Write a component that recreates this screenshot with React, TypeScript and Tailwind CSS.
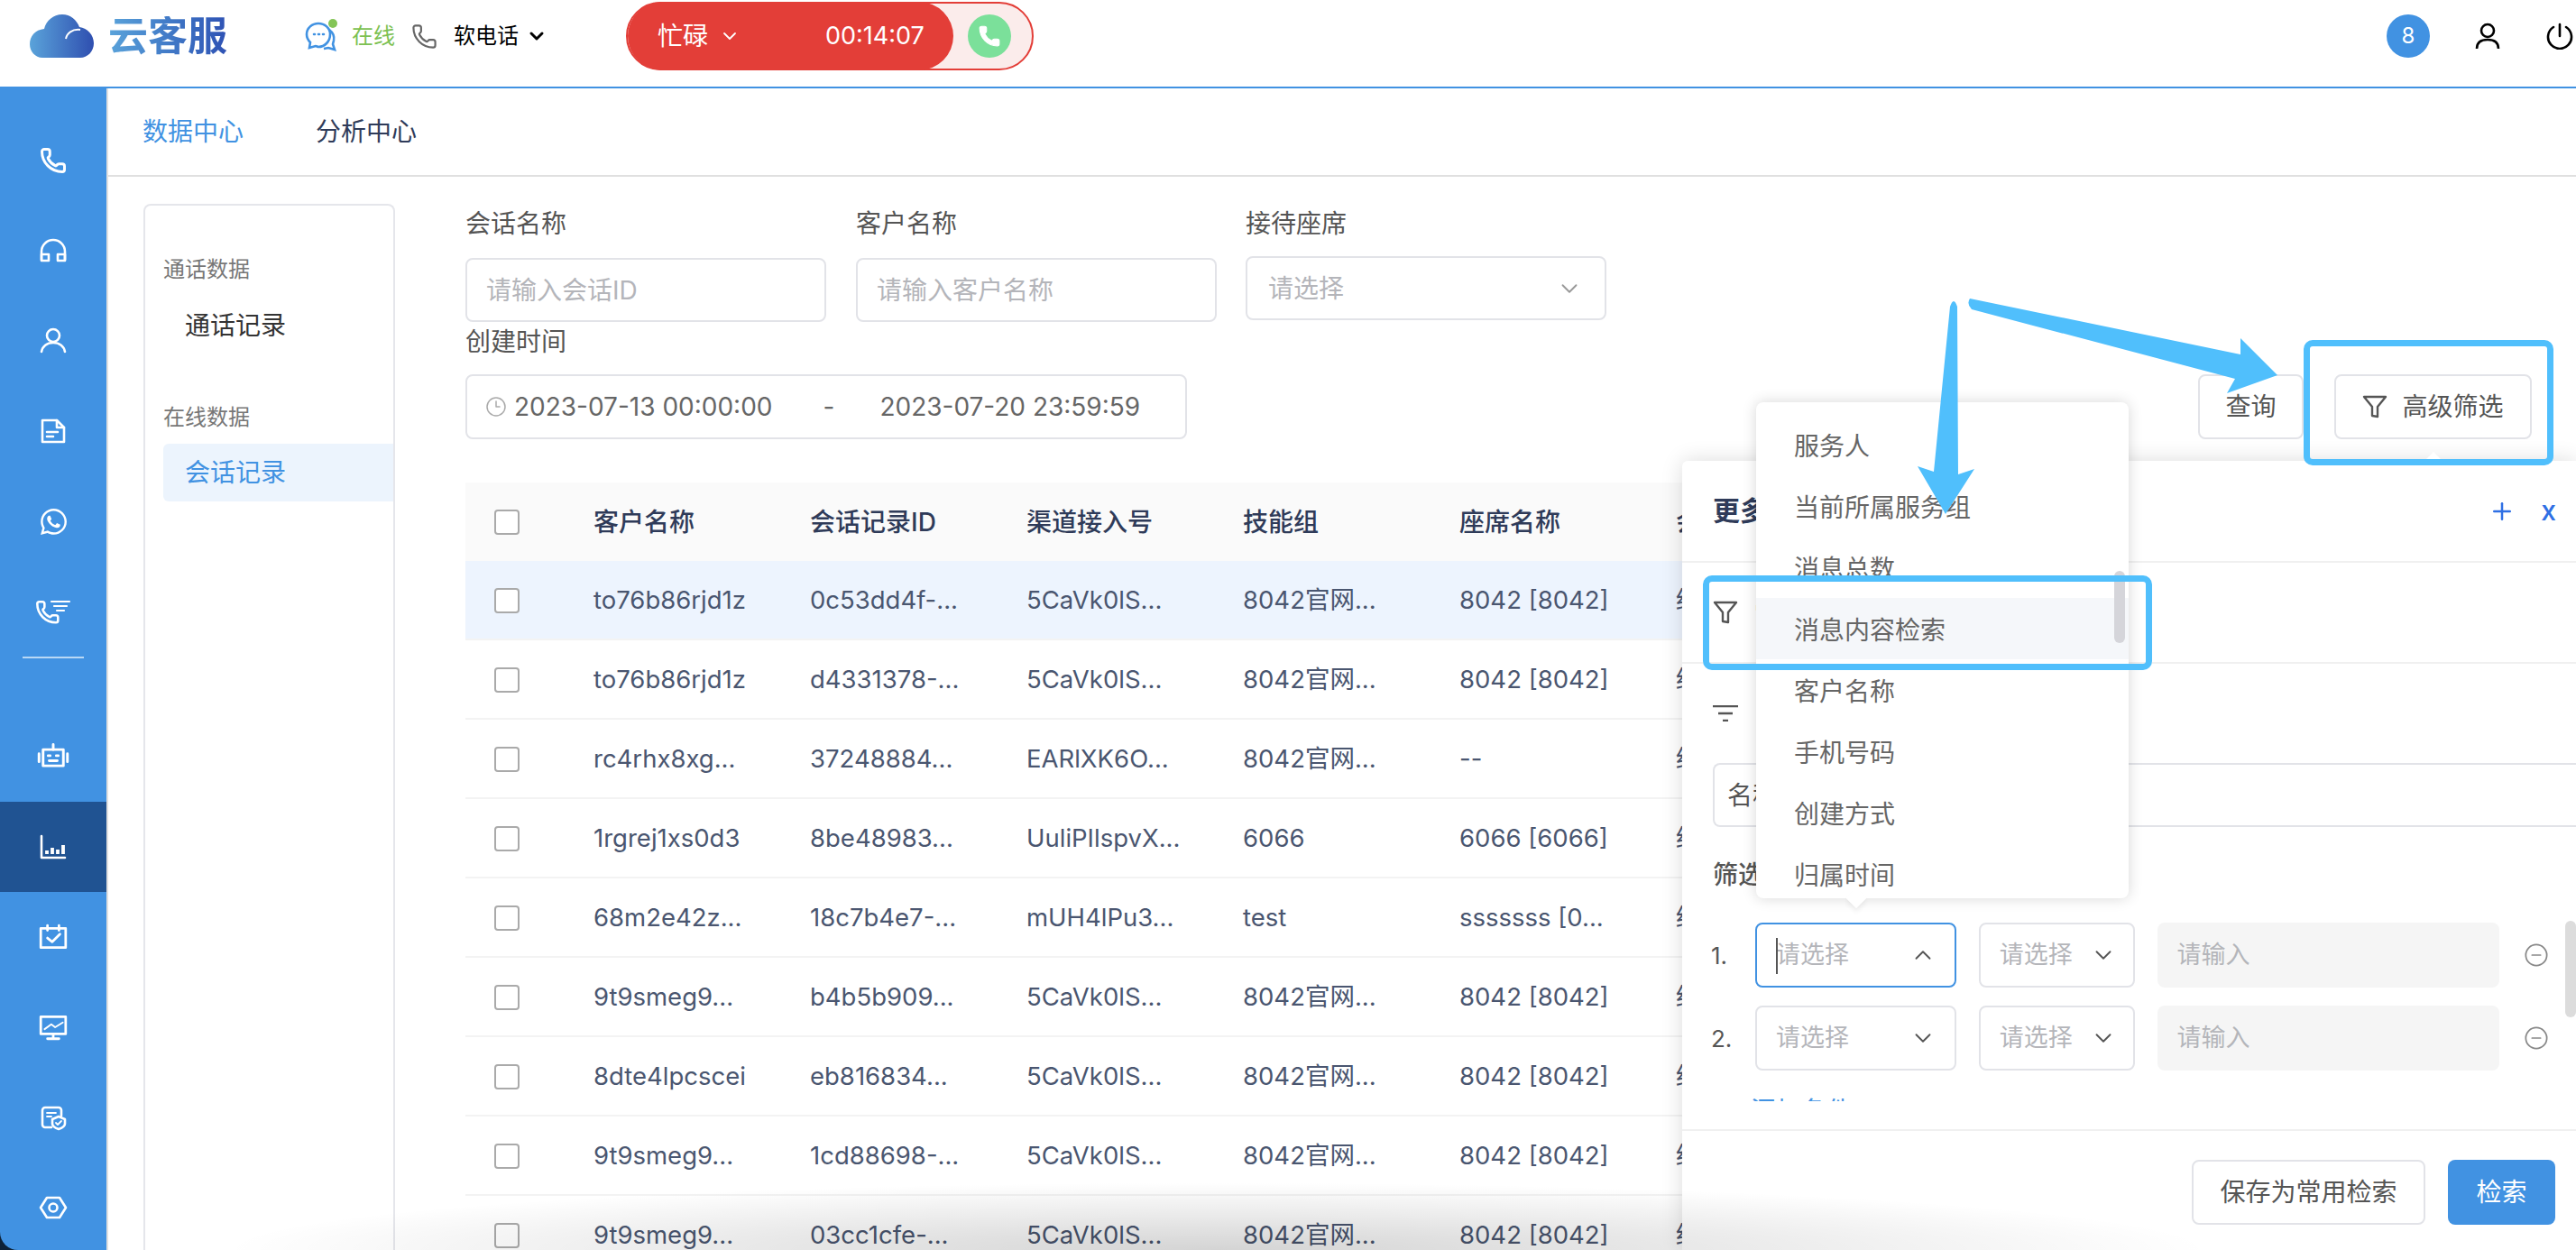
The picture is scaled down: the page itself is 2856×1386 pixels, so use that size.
import { ChevronDown, ChevronUp, CircleMinus, Clock3, Phone, Plus } from "lucide-react";
import { FaWhatsapp } from "react-icons/fa";

const PHONE_PATH =
  "M13.832 16.568a1 1 0 0 0 1.213-.303l.355-.465A2 2 0 0 1 17 15h3a2 2 0 0 1 2 2v3a2 2 0 0 1-2 2A18 18 0 0 1 2 4a2 2 0 0 1 2-2h3a2 2 0 0 1 2 2v3a2 2 0 0 1-.8 1.6l-.468.351a1 1 0 0 0-.292 1.233 14 14 0 0 0 6.392 6.384";

const FONT = "font-['Inter','Noto_Sans_CJK_SC',sans-serif]";

const Stroke = ({ children, size = 32 }: { children: React.ReactNode; size?: number }) => (
  <svg width={size} height={size} viewBox="0 0 32 32" fill="none" stroke="white" strokeWidth={2.6} strokeLinejoin="round" strokeLinecap="round">
    {children}
  </svg>
);

const navTop = [
  <Phone key="phone" size={30} color="white" strokeWidth={2.4} />,
  <Stroke key="head">
    <path d="M3 26v-9a13 13 0 0 1 26 0v9" />
    <rect x="3" y="20" width="8" height="7" />
    <rect x="21" y="20" width="8" height="7" />
  </Stroke>,
  <Stroke key="user">
    <circle cx="16" cy="10" r="7" />
    <path d="M3 28c1-6 6-10 13-10s12 4 13 10" />
  </Stroke>,
  <Stroke key="doc">
    <path d="M4 4h16l8 8v16H4z" />
    <path d="M20 4v8h8M9 17h12M9 22h7" />
  </Stroke>,
  <FaWhatsapp key="wa" size={33} color="white" />,
  <svg key="calllist" width="40" height="30" viewBox="0 0 40 30" fill="none" stroke="white" strokeWidth={2.2} strokeLinecap="round" strokeLinejoin="round">
    <g transform="translate(0 2) scale(1.15)">
      <path d={PHONE_PATH} />
    </g>
    <path d="M18 4h20M21 9h14M24 14h8" />
  </svg>,
];

const navBottom = [
  <Stroke key="bot" size={36}>
    <rect x="6" y="9" width="20" height="16" />
    <path d="M16 4v5M2 13v8M30 13v8M11 15h2M19 15h2M12 20h8" />
  </Stroke>,
  <Stroke key="chart">
    <path d="M3 4v24h26" />
    <path d="M9 20v4M15 17v7M21 19v5M27 14v10" strokeWidth={3.8} strokeLinecap="butt" />
  </Stroke>,
  <Stroke key="task" size={34}>
    <path d="M3 7h26v20H3z" />
    <path d="M10 4v5M22 4v5M10 17l5 4 8-8" />
  </Stroke>,
  <Stroke key="screen" size={34}>
    <path d="M3 5h26v18H3zM10 28h12M16 23v5" />
    <path d="M7 18l7-5 4 3 8-5" strokeWidth={1.8} />
  </Stroke>,
  <Stroke key="shield">
    <path d="M14 27H7a3 3 0 0 1-3-3V8a3 3 0 0 1 3-3h15a3 3 0 0 1 3 3v6" />
    <path d="M9 11h10M9 15h5" strokeWidth={1.8} />
    <path d="M22 15l7 3v5c0 3-4 5-7 6-3-1-7-3-7-6v-5z" />
    <path d="M19 22l2 2 4-4" strokeWidth={1.8} />
  </Stroke>,
  <Stroke key="hex">
    <path d="M9 5h14l7 11-7 11H9L2 16z" />
    <circle cx="16" cy="16" r="4.5" />
  </Stroke>,
];

const rows = [
  ["to76b86rjd1z", "0c53dd4f-...", "5CaVk0lS...", "8042官网...", "8042 [8042]"],
  ["to76b86rjd1z", "d4331378-...", "5CaVk0lS...", "8042官网...", "8042 [8042]"],
  ["rc4rhx8xg...", "37248884...", "EARlXK6O...", "8042官网...", "--"],
  ["1rgrej1xs0d3", "8be48983...", "UuliPIlspvX...", "6066", "6066 [6066]"],
  ["68m2e42z...", "18c7b4e7-...", "mUH4lPu3...", "test", "sssssss [0..."],
  ["9t9smeg9...", "b4b5b909...", "5CaVk0lS...", "8042官网...", "8042 [8042]"],
  ["8dte4lpcscei", "eb816834...", "5CaVk0lS...", "8042官网...", "8042 [8042]"],
  ["9t9smeg9...", "1cd88698-...", "5CaVk0lS...", "8042官网...", "8042 [8042]"],
  ["9t9smeg9...", "03cc1cfe-...", "5CaVk0lS...", "8042官网...", "8042 [8042]"],
];

const menu = ["服务人", "当前所属服务组", "消息总数", "消息内容检索", "客户名称", "手机号码", "创建方式", "归属时间"];

const Funnel = () => (
  <svg width="28" height="28" viewBox="0 0 28 28" fill="none" stroke="#555" strokeWidth={2.4} strokeLinejoin="round">
    <path d="M2 3h24L17 14v11l-6-1V14z" />
  </svg>
);

const Field = ({ label, text }: { label: string; text: string }) => (
  <div className="w-[400px]">
    <div className="flex h-[44px] items-center text-[28px] text-[#555]">{label}</div>
    <div className="mt-[16px] flex h-[71px] items-center rounded-lg border-2 border-[#e2e3e8] px-[21px] text-[28px] text-[#b4b5ba]">
      {text}
    </div>
  </div>
);

const Box = ({ className }: { className: string }) => (
  <div className={`pointer-events-none absolute rounded-[10px] border-[7px] border-[#50bffc] ${className}`} />
);

const ConditionRow = ({ no, active }: { no: string; active?: boolean }) => (
  <div className="flex h-[72px] items-center pr-[30px]">
    <div className="-ml-[2px] w-[49px] text-[26px] text-[#555]">{no}</div>
    <div className={`relative flex h-[72px] w-[223px] items-center justify-between rounded-lg border-2 pl-[21px] pr-[20px] text-[27px] text-[#b4b5ba] ${active ? "border-[#4192e2]" : "border-[#e2e3e8]"}`}>
      {active && <span className="absolute left-[21px] top-[15px] h-[40px] w-[2px] bg-[#555]" />}
      请选择
      {active ? <ChevronUp size={30} color="#555" strokeWidth={1.5} /> : <ChevronDown size={30} color="#555" strokeWidth={1.5} />}
    </div>
    <div className="ml-[25px] flex h-[72px] w-[173px] items-center justify-between rounded-lg border-2 border-[#e2e3e8] pl-[21px] pr-[18px] text-[27px] text-[#b4b5ba]">
      请选择
      <ChevronDown size={30} color="#555" strokeWidth={1.5} />
    </div>
    <div className="ml-[25px] flex h-[72px] w-[380px] items-center rounded-lg bg-[#f5f5f5] pl-[22px] text-[27px] text-[#b4b5ba]">请输入</div>
    <CircleMinus className="ml-[27px]" size={28} color="#888" strokeWidth={1.5} />
  </div>
);

export default function App() {
  return (
    <div className={`relative flex h-[1386px] w-[2856px] flex-col overflow-hidden bg-white ${FONT}`}>
      {/* 顶栏 */}
      <header className="flex h-[98px] shrink-0 items-center border-b-2 border-[#4192e2] pb-[16px] pl-[33px] pr-[3px]">
        <svg width="71" height="48" viewBox="0 0 71 48">
          <defs>
            <linearGradient id="cloud" x1="0" x2="1" y1="0" y2="0">
              <stop offset="0" stopColor="#5aa3da" />
              <stop offset="1" stopColor="#2f4fb0" />
            </linearGradient>
          </defs>
          <path d="M14 48C6 48 0 41 0 33c0-9 6-16 16-17C18 7 26 0 36 0c9 0 16 6 19 14 9 1 16 9 16 18 0 9-7 16-15 16z" fill="url(#cloud)" />
          <path d="M40 27c1-6 7-11 16-10" stroke="white" strokeWidth="2" fill="none" />
        </svg>
        <span className="ml-[16px] w-[132px] bg-gradient-to-r from-[#5aa3da] to-[#2f52b4] bg-clip-text text-[44px] font-semibold leading-none text-transparent">
          云客服
        </span>
        <svg className="ml-[86px]" width="38" height="38" viewBox="0 0 38 38" fill="none" stroke="#4192e2" strokeWidth="2.6">
          <path d="M15 5C8 5 2 10 2 17c0 4 2 7 4 9l-1 6 7-2c1 0 2 1 3 1 7 0 13-6 13-14 0-7-6-12-13-12z" />
          <path d="M27 12c4 3 6 7 5 12l-1 4 2 6-7-2-5 1" />
          <path d="M10 17h1M15 17h1M20 17h1" strokeLinecap="round" />
          <circle cx="31" cy="5" r="5" fill="#84c557" stroke="none" />
        </svg>
        <span className="ml-[14px] text-[24px] text-[#7cc152]">在线</span>
        <Phone className="ml-[18px]" size={29} color="#666" strokeWidth={1.8} />
        <span className="ml-[18px] text-[24px] text-black">软电话</span>
        <ChevronDown className="ml-[8px]" size={24} color="black" strokeWidth={3} />
        <div className="ml-[87px] flex h-[76px] w-[452px] items-center rounded-full border-2 border-[#e33e38] bg-[#fbeceb]">
          <div className="flex h-[76px] w-[361px] shrink-0 items-center rounded-full bg-[#e33e38] pl-[33px] text-[28px] text-white">
            忙碌
            <ChevronDown className="ml-[12px]" size={24} strokeWidth={1.8} />
            <span className="ml-[94px] text-[27px]">00:14:07</span>
          </div>
          <div className="ml-[16px] flex size-[48px] items-center justify-center rounded-full bg-[#7be09a]">
            <Phone size={26} color="white" fill="white" strokeWidth={1} />
          </div>
        </div>
        <div className="ml-auto flex size-[48px] items-center justify-center rounded-full bg-[#4192e2] text-[24px] text-white">8</div>
        <svg className="ml-[49px]" width="30" height="30" viewBox="0 0 30 30" fill="none" stroke="black" strokeWidth="2.6">
          <circle cx="15" cy="9" r="7" />
          <path d="M3 29c0-7 4-10 12-10s12 3 12 10" />
        </svg>
        <svg className="ml-[50px]" width="30" height="30" viewBox="0 0 30 30" fill="none" stroke="black" strokeWidth="2.6" strokeLinecap="round">
          <path d="M15 2v13M8 5a13 13 0 1 0 14 0" />
        </svg>
      </header>

      <div className="flex min-h-0 flex-1">
        {/* 左侧导航 */}
        <aside className="w-[120px] shrink-0 border-r-2 border-[#e0e0e0] bg-[#0e2238]">
          <div className="h-full rounded-bl-[20px] bg-[#4192e2] pt-[30px]">
            {navTop.map((icon, i) => (
              <div key={i} className="flex h-[100px] items-center justify-center">{icon}</div>
            ))}
            <div className="mx-auto h-[2px] w-[68px] bg-[#b9d8f5]" />
            <div className="mt-[59px]">
              {navBottom.map((icon, i) => (
                <div key={i} className={`flex h-[100px] items-center justify-center ${i === 1 ? "bg-[#205392]" : ""}`}>{icon}</div>
              ))}
            </div>
          </div>
        </aside>

        <main className="flex min-w-0 flex-1 flex-col">
          <nav className="flex h-[98px] shrink-0 items-center gap-[80px] border-b-2 border-[#e0e0e0] pl-[38px] text-[28px]">
            <span className="text-[#4192e2]">数据中心</span>
            <span className="text-[#2f3b59]">分析中心</span>
          </nav>

          <div className="flex min-h-0 flex-1 pl-[39px] pt-[30px]">
            {/* 数据分类 */}
            <div className="w-[279px] shrink-0 rounded-t-lg border-2 border-b-0 border-[#e5e6eb] pl-[20px] pt-[53px]">
              <div className="text-[24px] text-[#777]">通话数据</div>
              <div className="mt-[23px] pl-[24px] text-[28px] text-[#333]">通话记录</div>
              <div className="mt-[63px] text-[24px] text-[#777]">在线数据</div>
              <div className="mt-[11px] flex h-[64px] items-center rounded-l-md bg-[#ecf4fd] pl-[24px] text-[28px] text-[#4192e2]">会话记录</div>
            </div>

            <div className="ml-[78px] min-w-0 flex-1">
              <div className="flex gap-[33px]">
                <Field label="会话名称" text="请输入会话ID" />
                <Field label="客户名称" text="请输入客户名称" />
                <div className="-ml-px w-[400px]">
                  <div className="flex h-[44px] items-center text-[28px] text-[#555]">接待座席</div>
                  <div className="mt-[14px] flex h-[71px] items-center justify-between rounded-lg border-2 border-[#e2e3e8] pl-[23px] pr-[24px] text-[28px] text-[#b4b5ba]">
                    请选择
                    <ChevronDown size={30} color="#999" strokeWidth={1.5} />
                  </div>
                </div>
              </div>

              <div className="flex items-end pr-[49px]">
                <div>
                  <div className="flex h-[44px] items-center text-[28px] text-[#555]">创建时间</div>
                  <div className="mt-[14px] flex h-[72px] w-[800px] items-center rounded-lg border-2 border-[#e2e3e8] pl-[20px] text-[28px] text-[#666]">
                    <Clock3 size={24} color="#aaa" strokeWidth={1.5} />
                    <span className="ml-[8px]">2023-07-13 00:00:00</span>
                    <span className="ml-[56px]">-</span>
                    <span className="ml-[50px]">2023-07-20 23:59:59</span>
                  </div>
                </div>
                <button className="ml-auto flex h-[72px] w-[117px] items-center justify-center rounded-lg border-2 border-[#e2e3e8] text-[28px] text-[#555]">查询</button>
                <button className="ml-[34px] flex h-[72px] w-[219px] items-center justify-center gap-[16px] rounded-lg border-2 border-[#e2e3e8] text-[28px] text-[#555]">
                  <Funnel />
                  高级筛选
                </button>
              </div>

              {/* 会话记录列表 */}
              <div className="mt-[48px]">
                <div className="grid h-[87px] grid-cols-[142px_repeat(5,240px)_1fr] items-center bg-[#fafafa] text-[28px] font-medium text-[#2f3b59]">
                  <span className="ml-[32px] size-[28px] rounded border-2 border-[#aaa] bg-white" />
                  <span>客户名称</span>
                  <span>会话记录ID</span>
                  <span>渠道接入号</span>
                  <span>技能组</span>
                  <span>座席名称</span>
                  <span>会话状态</span>
                </div>
                {rows.map((row, i) => (
                  <div
                    key={i}
                    className={`grid h-[88px] grid-cols-[142px_repeat(5,240px)_1fr] items-center border-b-2 border-[#f3f3f3] pt-[2px] text-[27.5px] text-[#4a5670] ${i === 0 ? "bg-[#edf4fe]" : ""}`}
                  >
                    <span className="ml-[32px] size-[28px] rounded border-2 border-[#aaa] bg-white" />
                    {row.map((cell, j) => (
                      <span key={j}>{cell}</span>
                    ))}
                    <span>结束</span>
                  </div>
                ))}
              </div>
            </div>
          </div>
        </main>
      </div>

      {/* 更多筛选面板 */}
      <section className="absolute bottom-0 left-[1865px] right-0 top-[511px] flex flex-col rounded-tl-md bg-white shadow-[0_0_24px_rgba(0,0,0,0.14)]">
        <div className="flex h-[113px] shrink-0 items-center border-b-2 border-[#f0f0f0] pl-[34px] pr-[22px]">
          <span className="text-[30px] font-semibold text-[#2f3b59]">更多筛选</span>
          <Plus className="ml-auto" size={30} color="#2f6fe4" strokeWidth={2} />
          <span className="ml-[28px] text-[30px] font-medium text-[#2f6fe4]">x</span>
        </div>
        <div className="flex h-[112px] shrink-0 items-center gap-[18px] border-b-2 border-[#f0f0f0] pl-[34px]">
          <Funnel />
          <span className="text-[26px] text-[#555]">常用检索</span>
        </div>
        <div className="h-[485px] shrink-0 overflow-hidden pl-[34px]">
          <svg className="mt-[46px]" width="28" height="18" viewBox="0 0 28 18" stroke="#555" strokeWidth="2.4">
            <path d="M0 1h28M6 9h16M11 17h6" />
          </svg>
          <div className="mt-[46px] flex h-[71px] items-center rounded-l-lg border-2 border-r-0 border-[#e2e3e8] pl-[14px] text-[28px] text-[#555]">名称</div>
          <div className="mt-[32px] text-[28px] font-medium text-[#555]">筛选条件</div>
          <div className="mt-[32px] flex flex-col gap-[20px]">
            <ConditionRow no="1." active />
            <ConditionRow no="2." />
          </div>
          <div className="mt-[24px] flex items-center gap-[10px] pl-[8px] text-[28px] text-[#4192e2]">
            <Plus size={24} />
            添加条件
          </div>
        </div>
        <div className="mt-[31px] flex flex-1 items-start justify-end border-t-2 border-[#f0f0f0] pr-[23px] pt-[32px]">
          <button className="flex h-[72px] w-[259px] items-center justify-center rounded-lg border-2 border-[#e2e3e8] text-[28px] text-[#555]">保存为常用检索</button>
          <button className="ml-[25px] flex h-[72px] w-[119px] items-center justify-center rounded-lg bg-[#4192e2] text-[28px] text-white">检索</button>
        </div>
        <div className="absolute right-0 top-[510px] h-[107px] w-[12px] rounded-full bg-[#dcdcdc]" />
      </section>
      <div className="absolute left-[2691px] top-[504px] size-[14px] rotate-45 bg-white" />

      {/* 字段下拉 */}
      <div className="absolute left-[1947px] top-[446px] h-[550px] w-[413px] overflow-hidden rounded-lg bg-white pt-[13px] shadow-[0_0_16px_rgba(0,0,0,0.16)]">
        {menu.map((item, i) => (
          <div key={item} className={`flex h-[68px] items-center pl-[42px] pt-[3px] text-[28px] text-[#666] ${i === 3 ? "bg-[#f5f7fa]" : ""}`}>
            {item}
          </div>
        ))}
        <div className="absolute right-[4px] top-[187px] h-[80px] w-[12px] rounded-full bg-[#d5d5da]" />
      </div>
      <div className="absolute left-[2050px] top-[988px] size-[16px] rotate-45 bg-white shadow-[3px_3px_5px_rgba(0,0,0,0.06)]" />

      {/* 标注 */}
      <Box className="left-[2554px] top-[377px] h-[139px] w-[277px]" />
      <Box className="left-[1888px] top-[638px] h-[105px] w-[498px]" />
      <svg className="pointer-events-none absolute left-0 top-0" width="2856" height="1386" viewBox="0 0 2856 1386" fill="#50bffc">
        <path d="M2184 331 2484 393V375L2525 416 2469 436 2478 420 2186 343Q2180 337 2184 331Z" />
        <path d="M2162 340Q2166 328 2170 340L2171 526 2189 520 2157 570 2126 517 2144 523Z" />
      </svg>

      {/* 底部阴影 */}
      <div className="pointer-events-none absolute inset-x-0 bottom-0 h-[90px] bg-[radial-gradient(ellipse_1100px_75px_at_1350px_100%,rgba(0,0,0,0.17),rgba(0,0,0,0))]" />
    </div>
  );
}
